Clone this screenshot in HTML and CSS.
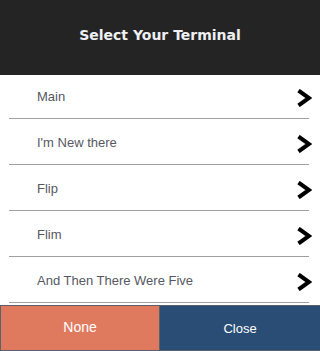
FILE: index.html
```html
<!DOCTYPE html>
<html>
<head>
  <link rel="stylesheet" href="styles.css">
</head>
<body>

<div class="panel">
  <div class="panel-header">
    <h2>Select Your Terminal</h2>
  </div>

  <ul class="terminal-list">
    <li class="terminal-item"><span>Main</span>
      <svg class="chevron" viewBox="0 0 16 18"><polyline points="2.5,1.5 13,9 2.5,16.5"/></svg></li>
    <li class="terminal-item"><span>I'm New there</span>
      <svg class="chevron" viewBox="0 0 16 18"><polyline points="2.5,1.5 13,9 2.5,16.5"/></svg></li>
    <li class="terminal-item"><span>Flip</span>
      <svg class="chevron" viewBox="0 0 16 18"><polyline points="2.5,1.5 13,9 2.5,16.5"/></svg></li>
    <li class="terminal-item"><span>Flim</span>
      <svg class="chevron" viewBox="0 0 16 18"><polyline points="2.5,1.5 13,9 2.5,16.5"/></svg></li>
    <li class="terminal-item"><span>And Then There Were Five</span>
      <svg class="chevron" viewBox="0 0 16 18"><polyline points="2.5,1.5 13,9 2.5,16.5"/></svg></li>
  </ul>

  <div class="panel-footer">
    <button type="button" class="btn-none">None</button>
    <button type="button" class="btn-close">Close</button>
  </div>
</div>

</body>
</html>
```
FILE: styles.css
```css
body {
  margin: 0;
  padding: 0;
  font-family: "Liberation Sans", Arial, sans-serif;
  background-color: #fff;
}

.panel {
  width: 320px;
  height: 351px;
  display: flex;
  flex-direction: column;
}

.panel-header {
  background-color: #242424;
  height: 75px;
  display: flex;
  align-items: center;
  justify-content: center;
}

h2 {
  margin: 0;
  color: #eef0f4;
  font-family: "DejaVu Sans", Verdana, sans-serif;
  font-size: 14px;
  font-weight: bold;
  padding-bottom: 6px;
}

.terminal-list {
  list-style: none;
  margin: 0;
  padding: 0;
}

.terminal-item {
  height: 43px;
  margin: 0 11px 2px 9px;
  padding: 0 0 0 28px;
  border-bottom: 1px solid #a0a0a0;
  display: flex;
  align-items: center;
  justify-content: space-between;
  font-size: 13px;
  color: #555862;
}

.chevron {
  width: 16px;
  height: 18px;
  margin-right: -3px;
  margin-top: 2px;
  fill: none;
  stroke: #000;
  stroke-width: 4;
  stroke-linejoin: miter;
}

.panel-footer {
  display: flex;
  height: 46px;
  box-sizing: border-box;
  border-top: 1px solid #5c6068;
  border-bottom: 1px solid #5c6068;
}

.panel-footer button {
  border: none;
  margin: 0;
  padding: 0;
  color: #fff;
  font-family: "Liberation Sans", Arial, sans-serif;
  cursor: pointer;
}

.btn-none {
  width: 160px;
  background-color: #e07a5f;
  font-size: 14px;
  border-left: 1px solid #5c6068 !important;
  border-right: 1px solid #5c6068 !important;
  padding-bottom: 3px !important;
}

.btn-close {
  flex: 1;
  background-color: #2a4d75;
  font-size: 13px;
}
```
